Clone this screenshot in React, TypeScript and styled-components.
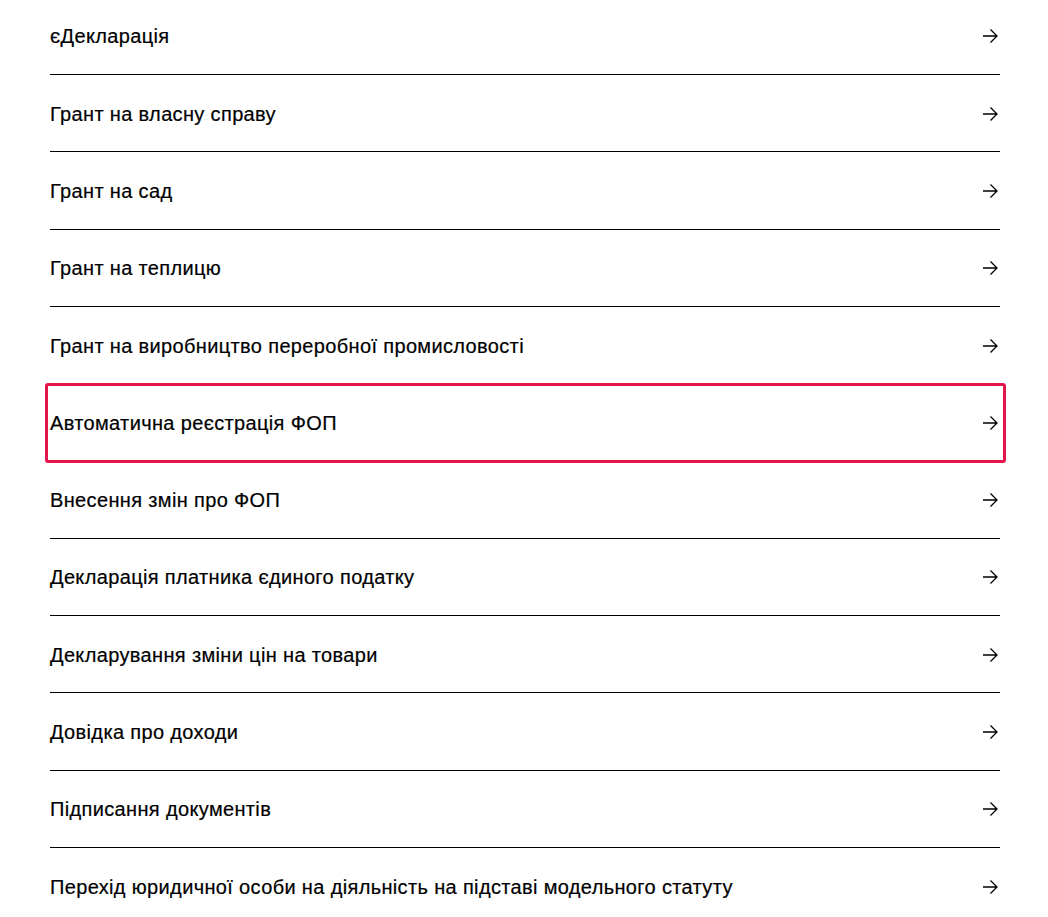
import React from 'react';
import styled, { createGlobalStyle } from 'styled-components';

const GlobalStyle = createGlobalStyle`
	html, body {
		margin: 0;
		padding: 0;
		background: #fff;
	}
	body {
		font-family: 'Liberation Sans', Arial, sans-serif;
		color: #000;
		overflow: hidden;
	}
`;

const Page = styled.main`
	padding: 0 48px 0 50px;
	margin-top: -2.3px;
`;

const List = styled.ul`
	list-style: none;
	margin: 0;
	padding: 0;
`;

const Item = styled.li`
	position: relative;
	box-sizing: border-box;
	height: 77.3px;
	border-bottom: 1px solid #000;
	&:last-child {
		border-bottom: none;
	}
`;

const Link = styled.a`
	display: flex;
	justify-content: space-between;
	align-items: center;
	height: 100%;
	padding-top: 1px;
	box-sizing: border-box;
	color: #000;
	text-decoration: none;
	font-size: 20px;
	line-height: 24px;
	cursor: pointer;
`;

const Title = styled.span`
	letter-spacing: 0.35px;
	-webkit-text-stroke: 0.2px #000;
`;

const Arrow = styled.svg`
	flex: 0 0 16px;
	width: 16px;
	height: 16px;
	margin-right: 2px;
	stroke: #000;
	stroke-width: 1.3;
	fill: none;
`;

// focus frame drawn over the active row
const Focus = styled.span`
	position: absolute;
	top: -1px;
	left: -5px;
	right: -6px;
	bottom: -3px;
	border: 3px solid #e3164b;
	border-radius: 3px;
	pointer-events: none;
`;

const services = [
	'єДекларація',
	'Грант на власну справу',
	'Грант на сад',
	'Грант на теплицю',
	'Грант на виробництво переробної промисловості',
	'Автоматична реєстрація ФОП',
	'Внесення змін про ФОП',
	'Декларація платника єдиного податку',
	'Декларування зміни цін на товари',
	'Довідка про доходи',
	'Підписання документів',
	'Перехід юридичної особи на діяльність на підставі модельного статуту',
];

const ArrowIcon = () => (
	<Arrow viewBox="0 0 16 16">
		<path d="M1 8h14M8.5 1.5 15 8l-6.5 6.5" />
	</Arrow>
);

const App = () => {
	const active = 'Автоматична реєстрація ФОП';
	return (
		<Page>
			<GlobalStyle />
			<List>
				{services.map((name) => (
					<Item key={name}>
						<Link>
							<Title>{name}</Title>
							<ArrowIcon />
						</Link>
						{name === active && <Focus />}
					</Item>
				))}
			</List>
		</Page>
	);
};

export default App;
